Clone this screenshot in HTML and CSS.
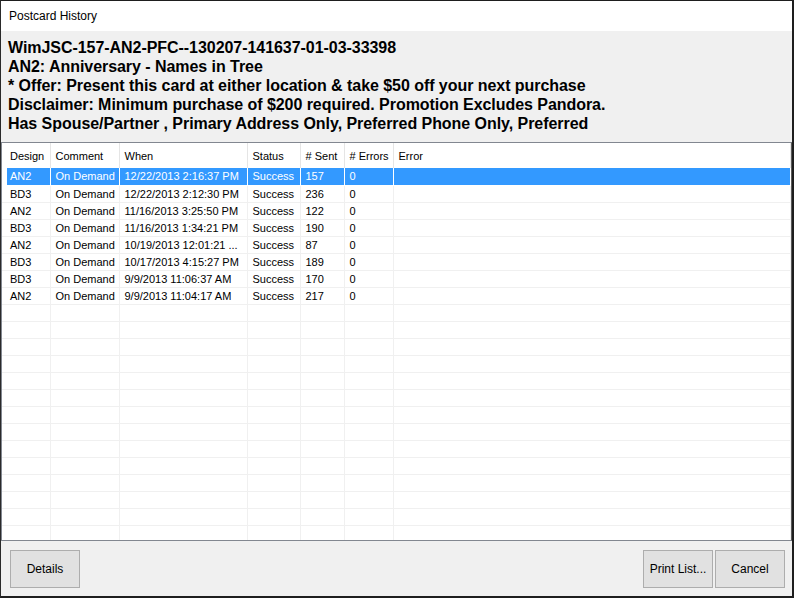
FILE: index.html
```html
<!DOCTYPE html>
<html lang="en">
<head>
	<meta charset="UTF-8">
	<title>Postcard History</title>
	<link rel="stylesheet" href="styles.css">
</head>
<body>
	<div class="window">
		<div class="titlebar">Postcard History</div>
		<div class="info">
			<div>WimJSC-157-AN2-PFC--130207-141637-01-03-33398</div>
			<div>AN2: Anniversary - Names in Tree</div>
			<div>* Offer: Present this card at either location &amp; take $50 off your next purchase</div>
			<div>Disclaimer: Minimum purchase of $200 required. Promotion Excludes Pandora.</div>
			<div>Has Spouse/Partner , Primary Address Only, Preferred Phone Only, Preferred</div>
		</div>
		<div class="grid">
			<table class="list">
				<colgroup>
					<col class="c-pad">
					<col class="c-design">
					<col class="c-comment">
					<col class="c-when">
					<col class="c-status">
					<col class="c-sent">
					<col class="c-errors">
					<col>
				</colgroup>
				<thead>
					<tr>
						<th class="pad"></th>
						<th class="first">Design</th>
						<th>Comment</th>
						<th>When</th>
						<th>Status</th>
						<th># Sent</th>
						<th># Errors</th>
						<th>Error</th>
					</tr>
				</thead>
				<tbody id="rows"></tbody>
			</table>
		</div>
		<div class="footer">
			<button class="btn">Details</button>
			<div class="spacer"></div>
			<button class="btn">Print List...</button>
			<button class="btn">Cancel</button>
		</div>
	</div>
	<script type="text/javascript">
		var data = [
			['AN2', 'On Demand', '12/22/2013 2:16:37 PM', 'Success', '157', '0'],
			['BD3', 'On Demand', '12/22/2013 2:12:30 PM', 'Success', '236', '0'],
			['AN2', 'On Demand', '11/16/2013 3:25:50 PM', 'Success', '122', '0'],
			['BD3', 'On Demand', '11/16/2013 1:34:21 PM', 'Success', '190', '0'],
			['AN2', 'On Demand', '10/19/2013 12:01:21 ...', 'Success', '87', '0'],
			['BD3', 'On Demand', '10/17/2013 4:15:27 PM', 'Success', '189', '0'],
			['BD3', 'On Demand', '9/9/2013 11:06:37 AM', 'Success', '170', '0'],
			['AN2', 'On Demand', '9/9/2013 11:04:17 AM', 'Success', '217', '0']
		];

		var tbody = document.getElementById('rows');
		// 8 rows of data, then empty rows to fill the list
		for (var i = 0; i < 23; i++) {
			var tr = document.createElement('tr');
			if (i === 0) tr.className = 'selected';
			var html = '<td class="pad"></td>';
			var row = data[i] || ['', '', '', '', '', ''];
			for (var j = 0; j < row.length; j++) {
				html += '<td' + (j === 0 ? ' class="first"' : '') + '>' + row[j] + '</td>';
			}
			html += '<td></td>';
			tr.innerHTML = html;
			tbody.appendChild(tr);
		}
	</script>
</body>
</html>
```

FILE: styles.css
```css
* { margin: 0; padding: 0; box-sizing: border-box; }
body {
	background-color: #fff;
	font-family: "Liberation Sans", Arial, sans-serif;
	color: #000;
}
.window {
	width: 794px;
	height: 598px;
	border-top: 1px solid #1e1e1e;
	border-left: 1px solid #2a2a2a;
	border-right: 2px solid #1e1e1e;
	border-bottom: 2px solid #1e1e1e;
	display: flex;
	flex-direction: column;
	background-color: #f0f0f0;
}
.titlebar {
	height: 30px;
	line-height: 30px;
	padding-left: 8px;
	font-size: 12px;
	background-color: #fff;
}
.info {
	height: 111px;
	padding: 7px 7px 0 7px;
	font-size: 16px;
	font-weight: bold;
	line-height: 19px;
	letter-spacing: -0.05px;
	white-space: nowrap;
	overflow: hidden;
}
.grid {
	height: 399px;
	border: 1px solid #828790;
	border-right-color: #5a5a5a;
	background-color: #fff;
	overflow: hidden;
}
.list {
	width: 100%;
	table-layout: fixed;
	border-collapse: collapse;
	font-size: 11px;
}
.c-pad { width: 5px; }
.c-design { width: 43px; }
.c-comment { width: 69px; }
.c-when { width: 128px; }
.c-status { width: 53px; }
.c-sent { width: 44px; }
.c-errors { width: 49px; }

.list th {
	height: 25px;
	font-weight: normal;
	text-align: left;
	padding-left: 5px;
	border-right: 1px solid #e5e5e5;
	white-space: nowrap;
	overflow: hidden;
}
.list td {
	height: 17px;
	padding-left: 5px;
	border-right: 1px solid #f0f0f0;
	border-bottom: 1px solid #f0f0f0;
	white-space: nowrap;
	overflow: hidden;
}
.list th.pad, .list td.pad {
	padding: 0;
	border-right: none;
}
.list th.first, .list td.first { padding-left: 3px; }
.list tr.selected td {
	background-color: #3399ff;
	color: #fff;
	border-right-color: #fff;
	border-bottom-color: #fff;
}
.list tr.selected td.pad { background-color: #fff; }

.footer {
	flex: 1;
	display: flex;
	align-items: flex-start;
	gap: 2px;
	padding: 9px 7px 0 9px;
}
.spacer { flex: 1; }
.btn {
	width: 70px;
	height: 38px;
	background-color: #e1e1e1;
	border: 1px solid #adadad;
	font-family: "Liberation Sans", Arial, sans-serif;
	font-size: 12px;
	color: #000;
}
```
